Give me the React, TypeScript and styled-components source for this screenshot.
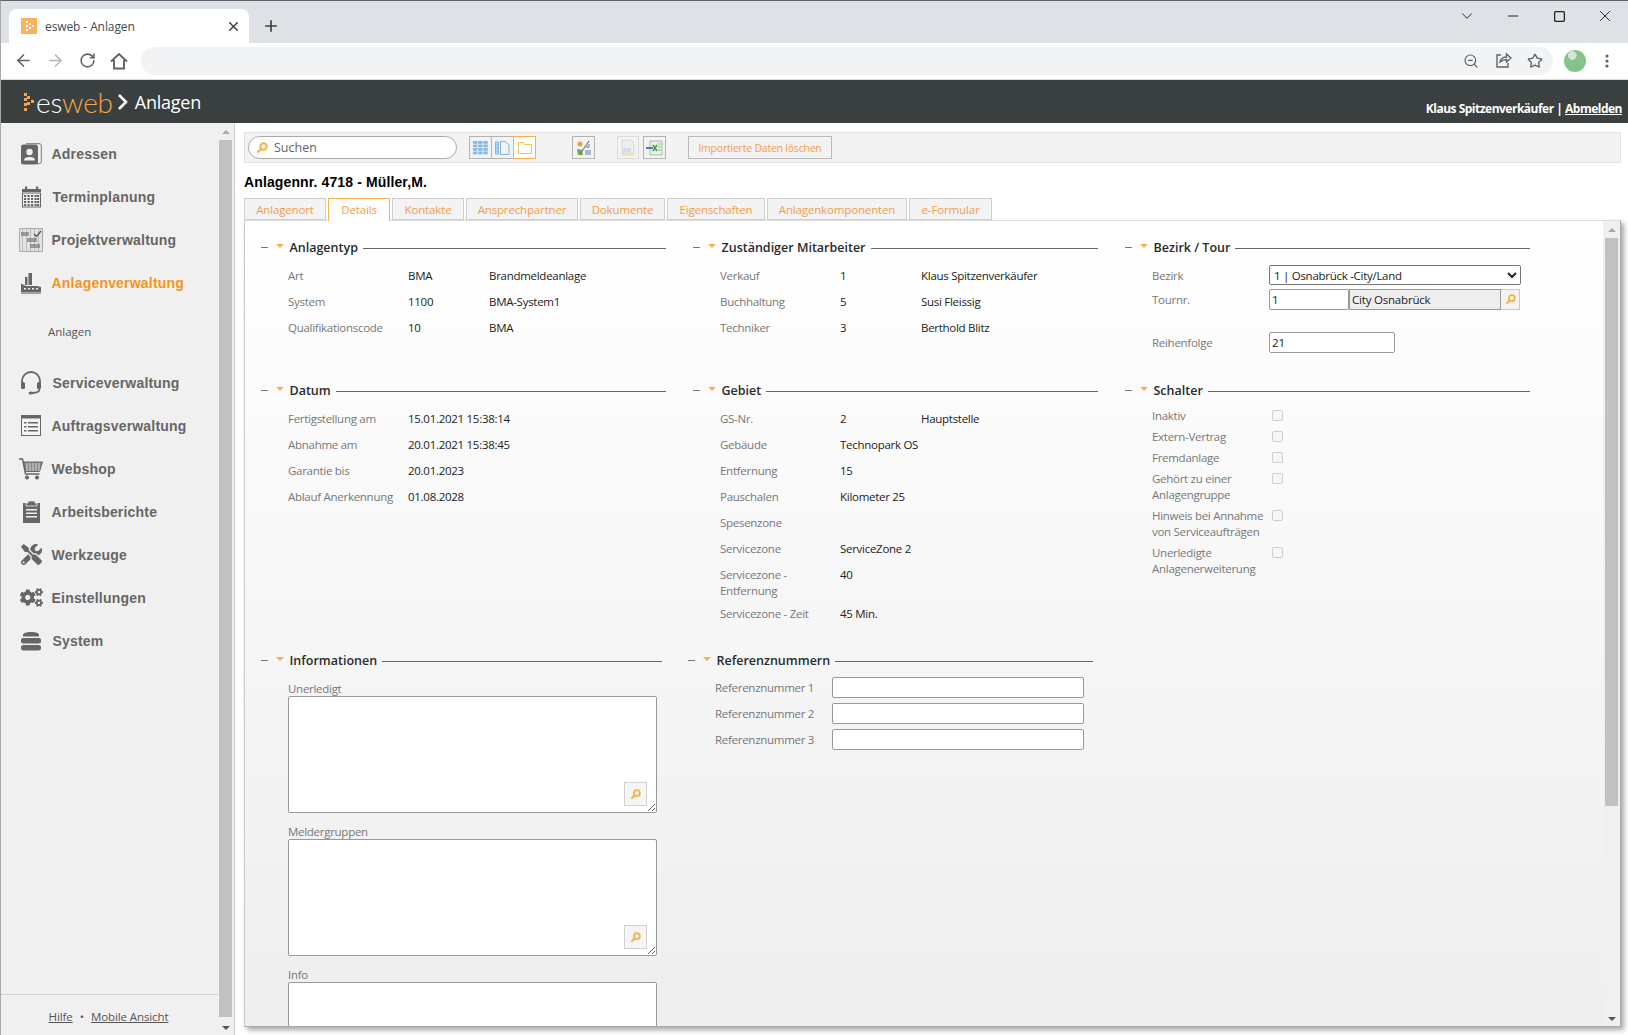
import React from 'react';
import styled, { createGlobalStyle } from 'styled-components';
import { ArrowLeft, ArrowRight, RotateCw, ZoomOut, Star, X, Plus, ChevronDown, Minus, Square } from 'lucide-react';
import { FaCogs, FaTools } from 'react-icons/fa';

const GlobalStyle = createGlobalStyle`
  html, body { margin: 0; padding: 0; height: 100%; overflow: hidden; background: #fff; }
  body { font-family: "Open Sans", "Noto Sans", sans-serif; font-size: 11.5px; color: #222; }
  * { box-sizing: border-box; }
`;

const Page = styled.div`
  width: 1628px;
  height: 1035px;
  display: flex;
  flex-direction: column;
  overflow: hidden;
  border-top: 1px solid #60646a;
  border-left: 1px solid #a8a8a8;
`;

/* browser chrome */
const TabStrip = styled.div`
  height: 42px;
  flex: none;
  background: #dee1e6;
  display: flex;
  align-items: flex-end;
  padding-left: 8px;
`;

const BrowserTab = styled.div`
  width: 240px;
  height: 34px;
  background: #fff;
  border-radius: 8px 8px 0 0;
  display: flex;
  align-items: center;
  padding: 0 8px 0 12px;
  font-size: 12px;
  letter-spacing: -0.1px;
  color: #45494e;
  gap: 8px;
`;

const TabTitle = styled.span`
  flex: 1;
`;

const NewTab = styled.div`
  width: 44px;
  height: 34px;
  display: flex;
  align-items: center;
  justify-content: center;
  color: #3c4043;
`;

const WindowButtons = styled.div`
  margin-left: auto;
  align-self: flex-start;
  display: flex;
`;

const WindowButton = styled.div`
  width: 46px;
  height: 30px;
  display: flex;
  align-items: center;
  justify-content: center;
  color: #222;
`;

const Toolbar = styled.div`
  height: 37px;
  flex: none;
  background: #fff;
  border-bottom: 1px solid #dcdcdc;
  display: flex;
  align-items: center;
  padding-bottom: 1px;
  padding-left: 6px;
`;

const NavButton = styled.div<{ $faded?: boolean }>`
  width: 32px;
  height: 28px;
  display: flex;
  align-items: center;
  justify-content: center;
  color: ${p => (p.$faded ? '#b3b5b8' : '#5f6368')};
`;

const Omnibox = styled.div`
  width: 1412px;
  height: 28px;
  margin-left: 6px;
  border-radius: 14px;
  background: #f1f3f4;
  display: flex;
  align-items: center;
  justify-content: flex-end;
  padding-right: 2px;
`;

const Avatar = styled.div`
  width: 22px;
  height: 22px;
  margin-left: 11px;
  border-radius: 50%;
  background: radial-gradient(circle at 38% 25%, #d4e8d2 0 4px, #84c389 4.5px);
`;

const MenuDots = styled(NavButton)`
  margin-left: 5px;
`;

/* app header */
const Header = styled.header`
  height: 43px;
  flex: none;
  background: #3a3f3f;
  display: flex;
  align-items: center;
  padding: 0 6px 0 23px;
  color: #fff;
`;

const LogoText = styled.span`
  font-family: "Lato", sans-serif;
  font-weight: 300;
  font-size: 28px;
  line-height: 30px;
  margin-left: 1px;
  letter-spacing: -0.2px;
`;

const LogoAccent = styled.span`
  color: #f5a54a;
`;

const HeaderTitle = styled.span`
  font-size: 18px;
  letter-spacing: -0.25px;
  margin-left: 7px;
`;

const UserBox = styled.div`
  margin-left: auto;
  align-self: flex-end;
  padding-bottom: 6px;
  font-size: 12px;
  font-weight: 700;
  letter-spacing: -0.5px;
`;

const SignOut = styled.a`
  color: #fff;
  text-decoration: underline;
`;

const Body = styled.div`
  flex: 1;
  display: flex;
  min-height: 0;
`;

/* sidebar */
const Sidebar = styled.aside`
  width: 234px;
  flex: none;
  display: flex;
  background: #f0f0f0;
  border-right: 1px solid #cdcdcd;
`;

const SideMain = styled.div`
  width: 217px;
  display: flex;
  flex-direction: column;
`;

const NavList = styled.nav`
  flex: 1;
  padding-top: 9px;
`;

const NavItem = styled.div<{ $active?: boolean; $shift?: number }>`
  height: 43px;
  display: flex;
  align-items: center;
  padding-left: 18px;
  font-family: "Liberation Sans", Arial, sans-serif;
  font-weight: 700;
  font-size: 14px;
  letter-spacing: 0.2px;
  color: ${p => (p.$active ? '#f7941d' : '#666')};
  span { margin-left: ${p => 8.5 + (p.$shift || 0)}px; }
`;

const NavIcon = styled.div`
  width: 24px;
  height: 24px;
  flex: none;
  display: flex;
  align-items: center;
  justify-content: center;
  color: #666;
`;

const SubItem = styled.div`
  height: 57px;
  padding: 0 0 3px 47px;
  display: flex;
  align-items: center;
  font-size: 11.5px;
  color: #555;
`;

const SideFooter = styled.div`
  height: 40px;
  flex: none;
  margin-bottom: 1px;
  padding: 4px 2px 0 0;
  border-top: 1px solid #d2d2d2;
  display: flex;
  justify-content: center;
  align-items: center;
  gap: 7px;
  font-size: 11.5px;
  letter-spacing: -0.1px;
  color: #555;
  a { color: #555; text-decoration: underline; }
`;

const Track = styled.div<{ $width: number; $bg: string }>`
  width: ${p => p.$width}px;
  flex: none;
  display: flex;
  flex-direction: column;
  align-items: center;
  background: ${p => p.$bg};
`;

const Thumb = styled.div<{ $height: number }>`
  width: 13px;
  height: ${p => p.$height}px;
  flex: none;
  background: #c1c1c1;
`;

const ArrowCell = styled.div<{ $down?: boolean }>`
  flex: ${p => (p.$down ? '1' : 'none')};
  height: 17px;
  width: 100%;
  display: flex;
  justify-content: center;
  align-items: ${p => (p.$down ? 'flex-end' : 'center')};
  padding-bottom: ${p => (p.$down ? '5px' : '0')};
  &::after {
    content: '';
    border-left: 4px solid transparent;
    border-right: 4px solid transparent;
    ${p => (p.$down ? 'border-top: 4px solid #555;' : 'border-bottom: 4px solid #a8a8a8;')}
  }
`;

/* main area */
const Main = styled.main`
  flex: 1;
  min-width: 0;
  padding: 9px 7px 8px 9px;
  display: flex;
  flex-direction: column;
  background: #fff;
`;

const ActionBar = styled.div`
  height: 31px;
  flex: none;
  background: #f3f3f3;
  border: 1px solid #e3e3e3;
  display: flex;
  align-items: center;
  padding-left: 3px;
`;

const SearchPill = styled.div`
  width: 209px;
  height: 23px;
  border: 1px solid #a9a9a9;
  border-radius: 12px;
  background: #fff;
  display: flex;
  align-items: center;
  padding-left: 7px;
  gap: 6px;
  font-size: 12.5px;
  color: #666;
`;

const IconGroup = styled.div<{ $gap: number }>`
  display: flex;
  margin-left: ${p => p.$gap}px;
`;

const IconButton = styled.div<{ $active?: boolean; $muted?: boolean }>`
  width: ${p => (p.$muted ? 22 : 23)}px;
  height: 23px;
  margin-left: ${p => (p.$active ? -1 : 0)}px;
  border: 1px solid ${p => (p.$active ? '#f7b04a' : p.$muted ? '#dcdcdc' : '#b3b3b3')};
  background: ${p => (p.$active ? '#fff' : '#f3f3f3')};
  display: flex;
  align-items: center;
  justify-content: center;
  & + & { margin-left: -1px; }
`;

const PlainButton = styled.div`
  width: 144px;
  height: 23px;
  margin-left: 22px;
  border: 1px solid #b9b9b9;
  display: flex;
  align-items: center;
  justify-content: center;
  font-size: 10.5px;
  letter-spacing: -0.22px;
  color: #f39c4a;
`;

const RecordTitle = styled.h1`
  margin: 11px 0 0;
  height: 24px;
  line-height: 16px;
  font-family: "Liberation Sans", Arial, sans-serif;
  font-size: 14px;
  font-weight: 700;
  letter-spacing: 0.12px;
  color: #000;
`;

const TabRow = styled.div`
  display: flex;
  gap: 2px;
  height: 22px;
  flex: none;
  position: relative;
  z-index: 1;
`;

const DetailTab = styled.div<{ $active?: boolean; $width: number }>`
  width: ${p => p.$width}px;
  height: ${p => (p.$active ? 23 : 22)}px;
  padding-bottom: ${p => (p.$active ? 1 : 0)}px;
  display: flex;
  align-items: center;
  justify-content: center;
  background: ${p => (p.$active ? '#fff' : '#f3f3f3')};
  border: 1px solid ${p => (p.$active ? '#f7b04a' : '#cfcfcf')};
  border-bottom: ${p => (p.$active ? 'none' : '1px solid #cfcfcf')};
  color: #f39c4a;
  font-size: 11.5px;
  letter-spacing: -0.15px;
`;

const Panel = styled.section`
  flex: 1;
  min-height: 0;
  display: flex;
  border: 1px solid #c9c9c9;
  border-top-color: #dcdcdc;
  border-right-color: #aaa;
  border-bottom-color: #aaa;
  background: linear-gradient(#fff, #eeeeee);
  box-shadow: 3px 3px 5px rgba(0, 0, 0, 0.35);
`;

const PanelBody = styled.div`
  flex: 1;
  min-width: 0;
  overflow: hidden;
  padding: 17px 0 0 16px;
`;

const TopGrid = styled.div`
  display: grid;
  grid-template-columns: repeat(3, 405px);
  grid-template-rows: 143px 270px;
  column-gap: 27px;
`;

const BottomRow = styled.div`
  display: flex;
  gap: 26px;
`;

const Section = styled.div<{ $width?: number }>`
  width: ${p => p.$width || 405}px;
`;

const HeadingRow = styled.div`
  height: 18px;
  display: flex;
  align-items: center;
`;

const HeadingDash = styled.i`
  width: 7px;
  height: 1px;
  background: #777;
`;

const HeadingCaret = styled.i`
  margin-left: 7.5px;
  border-left: 4px solid transparent;
  border-right: 4px solid transparent;
  border-top: 4px solid #f7b04a;
  margin-top: -2px;
`;

const HeadingTitle = styled.span`
  margin-left: 6px;
  font-size: 12.5px;
  font-weight: 600;
  letter-spacing: 0;
  color: #2a2a2a;
`;

const HeadingLine = styled.i`
  flex: 1;
  height: 1px;
  margin: 2px 0 0 5px;
  background: #666;
`;

const SectionBody = styled.div<{ $top?: number }>`
  margin-top: ${p => (p.$top === undefined ? 6 : p.$top)}px;
  padding-left: 27px;
`;

const InfoRow = styled.div<{ $tall?: boolean }>`
  display: grid;
  grid-template-columns: 120px 81px 1fr;
  height: ${p => (p.$tall ? 39 : 26)}px;
  padding-top: 6px;
  line-height: 16px;
  letter-spacing: -0.28px;
`;

const Label = styled.div`
  color: #777;
`;

const Value = styled.div<{ $span?: boolean }>`
  color: #222;
  white-space: nowrap;
  grid-column: ${p => (p.$span ? 'span 2' : 'auto')};
`;

const FormRow = styled.div<{ $height: number }>`
  display: grid;
  grid-template-columns: 117px 1fr;
  align-items: start;
  height: ${p => p.$height}px;
  line-height: 16px;
  letter-spacing: -0.28px;
`;

const FormLabel = styled(Label)<{ $top: number }>`
  padding-top: ${p => p.$top}px;
`;

const District = styled.select`
  width: 252px;
  height: 20px;
  border: 1px solid #767676;
  border-radius: 2px;
  background: #fff;
  padding: 0;
  font-family: inherit;
  font-size: 11.5px;
  letter-spacing: -0.28px;
  color: #222;
`;

const TextInput = styled.input<{ $width: number }>`
  width: ${p => p.$width}px;
  height: 21px;
  border: 1px solid #999;
  border-radius: 2px;
  padding: 0 2px;
  font-family: inherit;
  font-size: 11.5px;
  letter-spacing: -0.2px;
  color: #222;
  background: #fff;
  display: block;
`;

const TourGroup = styled.div`
  display: flex;
`;

const ReadonlyInput = styled(TextInput)`
  background: #eeeeee;
  border-radius: 0;
  margin-left: 0;
`;

const LookupButton = styled.div`
  width: 19px;
  height: 21px;
  border: 1px solid #c9c9c9;
  border-left: none;
  background: #f3f3f3;
  display: flex;
  align-items: center;
  justify-content: center;
`;

const CheckRow = styled.div`
  display: grid;
  grid-template-columns: 120px 1fr;
  line-height: 16px;
  margin-bottom: 5px;
  letter-spacing: -0.28px;
  width: 200px;
`;

const CheckBox = styled.input`
  appearance: none;
  width: 11px;
  height: 11px;
  margin: 2px 0 0;
  border: 1px solid #cfcfcf;
  border-radius: 2px;
  background: #f6f6f6;
`;

const NoteBlock = styled.div`
  margin-bottom: 11px;
  position: relative;
  width: 369px;
`;

const NoteLabel = styled(Label)`
  line-height: 15px;
  letter-spacing: -0.28px;
`;

const NoteArea = styled.textarea`
  display: block;
  width: 369px;
  height: 117px;
  border: 1px solid #999;
  border-radius: 2px;
  background: #fff;
  resize: both;
  outline: none;
`;

const NoteButton = styled.div`
  position: absolute;
  right: 10px;
  bottom: 7px;
  width: 23px;
  height: 24px;
  border: 1px solid #d2d2d2;
  background: #f5f5f5;
  display: flex;
  align-items: center;
  justify-content: center;
`;

const RefRow = styled.div`
  display: grid;
  grid-template-columns: 117px 252px;
  height: 26px;
  align-items: center;
  letter-spacing: -0.28px;
`;

const RefLabel = styled(Label)`
  padding-top: 1px;
`;

/* drawings */
const Favicon = () => (
  <svg width="16" height="16" viewBox="0 0 16 16">
    <rect width="16" height="16" fill="#f9b25e" />
    <g fill="#fff">
      <rect x="5" y="3" width="2" height="2" /><rect x="8" y="5" width="2" height="2" />
      <rect x="11" y="7" width="2" height="2" /><rect x="8" y="9" width="2" height="2" />
      <rect x="5" y="11" width="2" height="2" /><rect x="5" y="7" width="2" height="2" />
    </g>
  </svg>
);

const LogoDots = () => (
  <svg width="11" height="18" viewBox="0 0 11 18" fill="#f5a54a">
    <rect x="0" y="0" width="3" height="3" /><rect x="3" y="3" width="3" height="3" />
    <rect x="0" y="5" width="3" height="3" /><rect x="7" y="7" width="3" height="3" />
    <rect x="3" y="9" width="3" height="3" /><rect x="0" y="10" width="3" height="3" />
    <rect x="0" y="15" width="3" height="3" />
  </svg>
);

const ChevronMark = styled.svg`
  margin-left: 3px;
`;

const HeaderChevron = () => (
  <ChevronMark width="12" height="18" viewBox="0 0 12 18">
    <path d="M3 2l7 7-7 7" fill="none" stroke="#fff" strokeWidth="2.6" />
  </ChevronMark>
);

const HomeIcon = () => (
  <svg width="20" height="20" viewBox="0 0 20 20" fill="none" stroke="currentColor" strokeWidth="1.9">
    <path d="M2 10.5L10 3l8 7.5M5 9v8.5h10V9" />
  </svg>
);

const ShareIcon = () => (
  <svg width="17" height="17" viewBox="0 0 17 17" fill="none" stroke="#5f6368" strokeWidth="1.4">
    <path d="M6 3H2v12h11v-4" />
    <path d="M5 10c1-3.5 3.5-5 6.5-5V2L16 6l-4.500 4V7.500C9 7.500 7 8.500 5 10z" />
  </svg>
);

const Key = ({ size = 12 }: { size?: number }) => (
  <svg width={size} height={size} viewBox="0 0 12 12" fill="none">
    <circle cx="7.500" cy="4.500" r="3.200" stroke="#f7b04a" strokeWidth="2" />
    <path d="M5 7L1.500 10.500" stroke="#f7b04a" strokeWidth="2.200" />
  </svg>
);

const GridIcon = () => (
  <svg width="15" height="14" viewBox="0 0 15 14" fill="#86b9e4">
    {[0, 3.500, 7, 10.500].map(y => [0, 5.200, 10.400].map(x => (
      <rect key={`${x}-${y}`} x={x} y={y} width="4.400" height="2.800" />
    )))}
  </svg>
);

const PageIcon = () => (
  <svg width="15" height="14" viewBox="0 0 15 14" fill="none" stroke="#7fb5e2">
    <path d="M5.500.5h5l3.500 3.500v9.500h-8.500z" />
    <path d="M.5 1h3v12h-3z" fill="#c2dcf1" />
    <path d="M1 4h2M1 7h2M1 10h2" />
  </svg>
);

const FolderIcon = () => (
  <svg width="14" height="12" viewBox="0 0 14 12" fill="#fff" stroke="#f7c25a">
    <path d="M.5 11.500V.5h4.500l1.500 2h7v9z" />
  </svg>
);

const MergeIcon = () => (
  <svg width="16" height="16" viewBox="0 0 16 16">
    <circle cx="4" cy="4" r="2.500" fill="#e8a33b" />
    <path d="M1 9l5 1 1 5H2z" fill="#7aa35c" />
    <path d="M13 1L4 14" stroke="#777" strokeWidth="1.200" />
    <path d="M10 4h4v4h-4zM9 10h6v5H9z" fill="#a7b8cf" />
  </svg>
);

const ImportDisabled = () => (
  <svg width="16" height="17" viewBox="0 0 16 17">
    <path d="M2 1h9l3 3v12H2z" fill="#eee" stroke="#d8d8d8" />
    <path d="M3 9h8v6H3z" fill="#cfdfee" />
    <path d="M5 13h9v3H5z" fill="#ede3bd" />
  </svg>
);

const ExcelIcon = () => (
  <svg width="17" height="16" viewBox="0 0 17 16">
    <path d="M4 1h12v14H4z" fill="#e6f2e3" stroke="#9cc49c" />
    <path d="M7 5l4 6M11 5l-4 6" stroke="#4a9a58" strokeWidth="1.600" />
    <path d="M12 4h3M12 7h3M12 10h3" stroke="#8cbb8c" />
    <path d="M0 8h7" stroke="#3a6ea8" strokeWidth="1.800" />
  </svg>
);

const IconAddress = () => (
  <svg width="22" height="22" viewBox="0 0 22 22">
    <path d="M6 .7h13.500a2 2 0 0 1 1.800 2v16a2 2 0 0 1-1.800 2H17" fill="none" stroke="#777" />
    <rect x="1" y="1.500" width="17" height="20" rx="2.500" fill="#666" />
    <circle cx="9.500" cy="9" r="3.200" fill="#f0f0f0" />
    <path d="M4 17.500c0-3 3-3.500 5.500-3.500s5.500.5 5.500 3.500z" fill="#f0f0f0" />
  </svg>
);

const IconCalendar = () => (
  <svg width="21" height="22" viewBox="0 0 21 22">
    <path d="M1 3h19v3H1z" fill="#666" />
    <rect x="4" y="0.500" width="2.200" height="4" fill="#666" />
    <rect x="15" y="0.500" width="2.200" height="4" fill="#666" />
    <rect x="1.500" y="7" width="18" height="14" fill="#f0f0f0" stroke="#666" />
    {[9, 12, 15, 18].map(y => [3, 6.500, 10, 13.500, 16].map(x => (
      <rect key={`${x}-${y}`} x={x} y={y} width="2.200" height="2" fill="#666" />
    )))}
  </svg>
);

const IconProject = () => (
  <svg width="24" height="24" viewBox="0 0 24 24" fill="none">
    <rect x=".5" y=".5" width="23" height="23" fill="#e3e3e3" stroke="#aaa" />
    <path d="M3.500 1v22M7.500 1v22M11.500 1v22M15.500 1v22M19.500 1v22" stroke="#bbb" />
    <path d="M2 5h8M2 7h8" stroke="#555" />
    <path d="M8 11h10M8 13h10M11 17h10M11 19h10" stroke="#555" />
    <path d="M15 6l2.500 2.500L22 3" stroke="#555" strokeWidth="1.300" />
  </svg>
);

const IconFactory = () => (
  <svg width="22" height="22" viewBox="0 0 22 22" fill="#666">
    <rect x="5" y="5" width="2.500" height="8" />
    <rect x="8.500" y="1" width="3.500" height="12" />
    <path d="M1 20.500v-9l5 2.500h11l4 1v5.500z" />
    <rect x="1" y="21" width="20" height="1" fill="#999" />
    <g fill="#f0f0f0">
      <rect x="4" y="16" width="2" height="1.500" /><rect x="8" y="16" width="2" height="1.500" />
      <rect x="12" y="16" width="2" height="1.500" /><rect x="16" y="16" width="2" height="1.500" />
    </g>
  </svg>
);

const IconHeadset = () => (
  <svg width="22" height="24" viewBox="0 0 22 24" fill="none" stroke="#666" strokeWidth="1.800">
    <path d="M2 14V10a9 9 0 0 1 18 0v4" />
    <rect x="1" y="11" width="4" height="7" rx="1.500" fill="#666" strokeWidth="0" />
    <rect x="17" y="11" width="4" height="7" rx="1.500" fill="#666" strokeWidth="0" />
    <path d="M19.500 18c0 3-3 3.800-7 3.800" />
    <ellipse cx="11" cy="22" rx="2.500" ry="1.500" fill="#666" strokeWidth="0" />
  </svg>
);

const IconOrders = () => (
  <svg width="20" height="21" viewBox="0 0 20 21">
    <rect x=".5" y=".5" width="19" height="20" fill="#f6f6f6" stroke="#666" strokeWidth="1" />
    <rect x=".5" y=".5" width="19" height="3" fill="#666" />
    <path d="M7 7h10v1.500H7zM7 11h10v1.500H7zM7 15h10v1.500H7zM3 7h2.500v1.500H3zM3 11h2.500v1.500H3zM3 15h2.500v1.500H3z" fill="#666" />
  </svg>
);

const IconCart = () => (
  <svg width="24" height="22" viewBox="0 0 24 22" fill="none" stroke="#666">
    <path d="M0 1h3.500l3 15h14" strokeWidth="1.400" />
    <path d="M4.500 4h19l-3 9.500H6.500z" fill="#888" />
    <path d="M8 5v8M11 5v8M14 5v8M17 5v8M20 5v8" stroke="#f0f0f0" strokeWidth=".8" />
    <circle cx="8" cy="19.500" r="1.600" fill="#666" />
    <circle cx="18" cy="19.500" r="1.600" fill="#666" />
  </svg>
);

const IconClipboard = () => (
  <svg width="19" height="23" viewBox="0 0 19 23" fill="#666">
    <path d="M1 3h17v20H1z" />
    <path d="M6 3V1h7v2h2v3H4V3z" stroke="#f0f0f0" strokeWidth=".8" />
    <path d="M4 9h11v1.500H4zM4 12.500h11V14H4zM4 16h11v1.500H4z" fill="#f0f0f0" />
  </svg>
);

const IconStack = () => (
  <svg width="20" height="20" viewBox="0 0 20 20" fill="#666">
    <path d="M2 4c0-2 3-3 8-3s8 1 8 3v1.500H2z" />
    <rect x="0" y="7" width="20" height="5.500" rx="2" />
    <rect x="0" y="14" width="20" height="5.500" rx="2.500" />
  </svg>
);

const navTop = [
  { label: 'Adressen', icon: <IconAddress />, shift: 0 },
  { label: 'Terminplanung', icon: <IconCalendar />, shift: 1 },
  { label: 'Projektverwaltung', icon: <IconProject />, shift: 0 },
  { label: 'Anlagenverwaltung', icon: <IconFactory />, shift: 0, active: true },
];

const navBottom = [
  { label: 'Serviceverwaltung', icon: <IconHeadset />, shift: 1 },
  { label: 'Auftragsverwaltung', icon: <IconOrders />, shift: 0 },
  { label: 'Webshop', icon: <IconCart />, shift: 0 },
  { label: 'Arbeitsberichte', icon: <IconClipboard />, shift: 0 },
  { label: 'Werkzeuge', icon: <FaTools size={21} />, shift: 0 },
  { label: 'Einstellungen', icon: <FaCogs size={23} />, shift: 0 },
  { label: 'System', icon: <IconStack />, shift: 1 },
];

const tabs = [
  { label: 'Anlagenort', width: 82 },
  { label: 'Details', width: 62, active: true },
  { label: 'Kontakte', width: 72 },
  { label: 'Ansprechpartner', width: 112 },
  { label: 'Dokumente', width: 85 },
  { label: 'Eigenschaften', width: 98 },
  { label: 'Anlagenkomponenten', width: 140 },
  { label: 'e-Formular', width: 83 },
];

const Heading = ({ title }: { title: string }) => (
  <HeadingRow>
    <HeadingDash />
    <HeadingCaret />
    <HeadingTitle>{title}</HeadingTitle>
    <HeadingLine />
  </HeadingRow>
);

type Info = { label: React.ReactNode; value?: string; desc?: string; tall?: boolean };

const InfoList = ({ rows }: { rows: Info[] }) => (
  <SectionBody>
    {rows.map((r, i) => (
      <InfoRow key={i} $tall={r.tall}>
        <Label>{r.label}</Label>
        <Value $span={!r.desc}>{r.value}</Value>
        {r.desc && <Value>{r.desc}</Value>}
      </InfoRow>
    ))}
  </SectionBody>
);

const switches: React.ReactNode[] = [
  'Inaktiv',
  'Extern-Vertrag',
  'Fremdanlage',
  <>Gehört zu einer<br />Anlagengruppe</>,
  <>Hinweis bei Annahme<br />von Serviceaufträgen</>,
  <>Unerledigte<br />Anlagenerweiterung</>,
];

const Scrollbar = ({ width, bg, thumb }: { width: number; bg: string; thumb: number }) => (
  <Track $width={width} $bg={bg}>
    <ArrowCell />
    <Thumb $height={thumb} />
    <ArrowCell $down />
  </Track>
);

const Note = ({ label }: { label: string }) => (
  <NoteBlock>
    <NoteLabel>{label}</NoteLabel>
    <NoteArea />
    <NoteButton><Key size={11} /></NoteButton>
  </NoteBlock>
);

export default function App() {
  return (
    <Page>
      <GlobalStyle />
      <TabStrip>
        <BrowserTab>
          <Favicon />
          <TabTitle>esweb - Anlagen</TabTitle>
          <X size={15} color="#3c4043" strokeWidth={2.4} />
        </BrowserTab>
        <NewTab><Plus size={18} strokeWidth={2.2} /></NewTab>
        <WindowButtons>
          <WindowButton><ChevronDown size={18} strokeWidth={1.300} /></WindowButton>
          <WindowButton><Minus size={16} strokeWidth={1.500} /></WindowButton>
          <WindowButton><Square size={13} strokeWidth={1.300} absoluteStrokeWidth /></WindowButton>
          <WindowButton><X size={18} strokeWidth={1.300} /></WindowButton>
        </WindowButtons>
      </TabStrip>
      <Toolbar>
        <NavButton><ArrowLeft size={19} strokeWidth={2} /></NavButton>
        <NavButton $faded><ArrowRight size={19} strokeWidth={2} /></NavButton>
        <NavButton><RotateCw size={17} strokeWidth={2.2} /></NavButton>
        <NavButton><HomeIcon /></NavButton>
        <Omnibox>
          <NavButton><ZoomOut size={16} strokeWidth={1.800} /></NavButton>
          <NavButton><ShareIcon /></NavButton>
          <NavButton><Star size={16} strokeWidth={2} /></NavButton>
        </Omnibox>
        <Avatar />
        <MenuDots>
          <svg width="4" height="14" viewBox="0 0 4 14" fill="#5f6368">
            <circle cx="2" cy="2" r="1.600" /><circle cx="2" cy="7" r="1.600" /><circle cx="2" cy="12" r="1.600" />
          </svg>
        </MenuDots>
      </Toolbar>
      <Header>
        <LogoDots />
        <LogoText>es<LogoAccent>web</LogoAccent></LogoText>
        <HeaderChevron />
        <HeaderTitle>Anlagen</HeaderTitle>
        <UserBox>Klaus Spitzenverkäufer | <SignOut>Abmelden</SignOut></UserBox>
      </Header>
      <Body>
        <Sidebar>
          <SideMain>
            <NavList>
              {navTop.map(n => (
                <NavItem key={n.label} $active={n.active} $shift={n.shift}>
                  <NavIcon>{n.icon}</NavIcon>
                  <span>{n.label}</span>
                </NavItem>
              ))}
              <SubItem>Anlagen</SubItem>
              {navBottom.map(n => (
                <NavItem key={n.label} $shift={n.shift}>
                  <NavIcon>{n.icon}</NavIcon>
                  <span>{n.label}</span>
                </NavItem>
              ))}
            </NavList>
            <SideFooter>
              <a>Hilfe</a><span>•</span><a>Mobile Ansicht</a>
            </SideFooter>
          </SideMain>
          <Scrollbar width={15} bg="#f0f0f0" thumb={877} />
        </Sidebar>
        <Main>
          <ActionBar>
            <SearchPill><Key />Suchen</SearchPill>
            <IconGroup $gap={12}>
              <IconButton><GridIcon /></IconButton>
              <IconButton><PageIcon /></IconButton>
              <IconButton $active><FolderIcon /></IconButton>
            </IconGroup>
            <IconGroup $gap={36}>
              <IconButton><MergeIcon /></IconButton>
            </IconGroup>
            <IconGroup $gap={22}>
              <IconButton $muted><ImportDisabled /></IconButton>
            </IconGroup>
            <IconGroup $gap={4}>
              <IconButton><ExcelIcon /></IconButton>
            </IconGroup>
            <PlainButton>Importierte Daten löschen</PlainButton>
          </ActionBar>
          <RecordTitle>Anlagennr. 4718 - Müller,M.</RecordTitle>
          <TabRow>
            {tabs.map(t => (
              <DetailTab key={t.label} $active={t.active} $width={t.width}>{t.label}</DetailTab>
            ))}
          </TabRow>
          <Panel>
            <PanelBody>
              <TopGrid>
                <Section>
                  <Heading title="Anlagentyp" />
                  <InfoList rows={[
                    { label: 'Art', value: 'BMA', desc: 'Brandmeldeanlage' },
                    { label: 'System', value: '1100', desc: 'BMA-System1' },
                    { label: 'Qualifikationscode', value: '10', desc: 'BMA' },
                  ]} />
                </Section>
                <Section>
                  <Heading title="Zuständiger Mitarbeiter" />
                  <InfoList rows={[
                    { label: 'Verkauf', value: '1', desc: 'Klaus Spitzenverkäufer' },
                    { label: 'Buchhaltung', value: '5', desc: 'Susi Fleissig' },
                    { label: 'Techniker', value: '3', desc: 'Berthold Blitz' },
                  ]} />
                </Section>
                <Section>
                  <Heading title="Bezirk / Tour" />
                  <SectionBody $top={9}>
                    <FormRow $height={24}>
                      <FormLabel $top={3}>Bezirk</FormLabel>
                      <District defaultValue="1">
                        <option value="1">1 | Osnabrück -City/Land</option>
                      </District>
                    </FormRow>
                    <FormRow $height={43}>
                      <FormLabel $top={3}>Tournr.</FormLabel>
                      <TourGroup>
                        <TextInput $width={80} readOnly defaultValue="1" />
                        <ReadonlyInput $width={152} readOnly defaultValue="City Osnabrück" />
                        <LookupButton><Key size={11} /></LookupButton>
                      </TourGroup>
                    </FormRow>
                    <FormRow $height={26}>
                      <FormLabel $top={3}>Reihenfolge</FormLabel>
                      <TextInput $width={126} readOnly defaultValue="21" />
                    </FormRow>
                  </SectionBody>
                </Section>
                <Section>
                  <Heading title="Datum" />
                  <InfoList rows={[
                    { label: 'Fertigstellung am', value: '15.01.2021 15:38:14' },
                    { label: 'Abnahme am', value: '20.01.2021 15:38:45' },
                    { label: 'Garantie bis', value: '20.01.2023' },
                    { label: 'Ablauf Anerkennung', value: '01.08.2028' },
                  ]} />
                </Section>
                <Section>
                  <Heading title="Gebiet" />
                  <InfoList rows={[
                    { label: 'GS-Nr.', value: '2', desc: 'Hauptstelle' },
                    { label: 'Gebäude', value: 'Technopark OS' },
                    { label: 'Entfernung', value: '15' },
                    { label: 'Pauschalen', value: 'Kilometer 25' },
                    { label: 'Spesenzone' },
                    { label: 'Servicezone', value: 'ServiceZone 2' },
                    { label: <>Servicezone -<br />Entfernung</>, value: '40', tall: true },
                    { label: 'Servicezone - Zeit', value: '45 Min.' },
                  ]} />
                </Section>
                <Section>
                  <Heading title="Schalter" />
                  <SectionBody $top={9}>
                    {switches.map((s, i) => (
                      <CheckRow key={i}>
                        <Label>{s}</Label>
                        <CheckBox type="checkbox" disabled />
                      </CheckRow>
                    ))}
                  </SectionBody>
                </Section>
              </TopGrid>
              <BottomRow>
                <Section $width={401}>
                  <Heading title="Informationen" />
                  <SectionBody $top={12}>
                    <Note label="Unerledigt" />
                    <Note label="Meldergruppen" />
                    <Note label="Info" />
                  </SectionBody>
                </Section>
                <Section>
                  <Heading title="Referenznummern" />
                  <SectionBody $top={5}>
                    {[1, 2, 3].map(n => (
                      <RefRow key={n}>
                        <RefLabel>Referenznummer {n}</RefLabel>
                        <TextInput $width={252} readOnly />
                      </RefRow>
                    ))}
                  </SectionBody>
                </Section>
              </BottomRow>
            </PanelBody>
            <Scrollbar width={17} bg="#f0f0f0" thumb={568} />
          </Panel>
        </Main>
      </Body>
    </Page>
  );
}
